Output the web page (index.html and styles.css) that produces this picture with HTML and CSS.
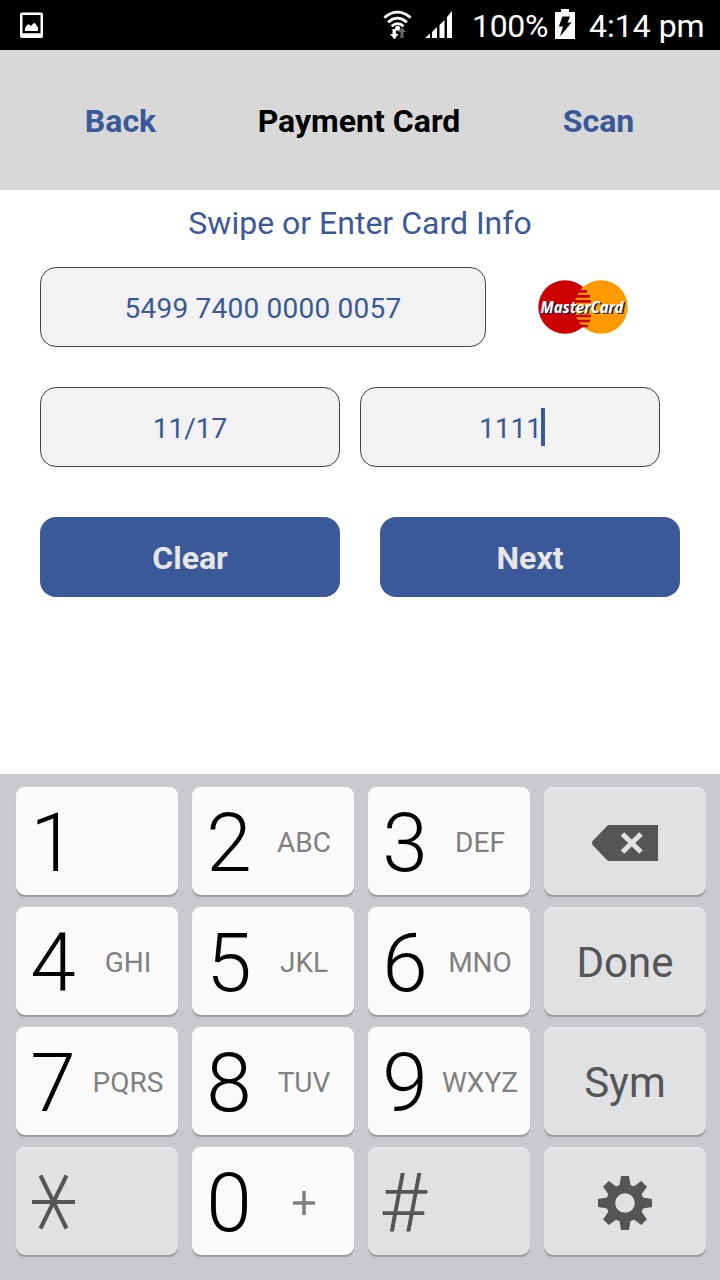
FILE: index.html
```html
<!DOCTYPE html>
<html lang="en">
<head>
  <meta charset="utf-8">
  <title>Payment Card</title>
  <link rel="stylesheet" href="styles.css">
</head>
<body>
  <div class="status">
    <svg class="icon-pic" width="26" height="28" viewBox="0 0 26 28">
      <path fill="#fff" fill-rule="evenodd" d="M3 .5h19a2 2 0 0 1 2 2v21.500a2 2 0 0 1-2 2H3a2 2 0 0 1-2-2V2.500a2 2 0 0 1 2-2zM3.500 3v18.300h18V3z"/>
      <path fill="#fff" d="M6 19v-3l2.500-3.500h1.500l2 1.500 2.500-2.800h1.500l3 4.300v3.500z"/>
    </svg>
    <div class="status-right">
      <svg class="icon-wifi" width="30" height="30" viewBox="0 0 30 30">
        <g fill="none" stroke="#fff" stroke-width="2.700">
          <path d="M1.300 7.600q13.200-11 26.400 0"/>
          <path d="M5 12.200q9.500-8 19 0"/>
          <path d="M8.600 16.200q6-5 12 0"/>
        </g>
        <circle cx="14.600" cy="18.200" r="2.500" fill="#fff"/>
        <path fill="#fff" d="M9.500 19h3.500v5h2.500l-4 5.300L7 24h2.500z"/>
        <path fill="#666" d="M17.500 28v-6h-2.700l4.200-4.600 4.200 4.600h-2.700v6z"/>
      </svg>
      <svg class="icon-signal" width="28" height="28" viewBox="0 0 28 28">
        <path fill="#fff" d="M0 27l5-4.500V27zM7 21l5-5v11H7zM14.500 14l5-5v18h-5zM22 6l5-6v27h-5z"/>
      </svg>
      <span class="percent">100%</span>
      <svg class="icon-battery" width="20" height="30" viewBox="0 0 20 30">
        <path fill="#fff" d="M6 0h8v3h6v27H0V3h6z"/>
        <path fill="#000" d="M7.500 7.500h7.500l-2.500 6h4L5 27.500l3-10H3.800z"/>
      </svg>
      <span class="time">4:14 pm</span>
    </div>
  </div>

  <div class="header">
    <a class="nav">Back</a>
    <h1>Payment Card</h1>
    <a class="nav">Scan</a>
  </div>

  <div class="content">
    <p class="hint">Swipe or Enter Card Info</p>
    <div class="row">
      <div class="field number">5499 7400 0000 0057</div>
      <svg class="logo" width="92" height="56" viewBox="0 0 92 56">
        <circle cx="27" cy="28" r="26.700" fill="#c00"/>
        <circle cx="63" cy="28" r="26.700" fill="#f90"/>
        <path stroke="#c00" stroke-width="2.600" d="M40 12.400h9M38 17.400h14M37 22.400h16M37 37h16M38 42h14M41 47h9"/>
        <g class="logo-text">
          <text x="4" y="34.500" fill="#224" textLength="83" lengthAdjust="spacingAndGlyphs">MasterCard</text>
          <text x="2.500" y="33.500" fill="#fff" textLength="83" lengthAdjust="spacingAndGlyphs">MasterCard</text>
        </g>
      </svg>
    </div>
    <div class="row">
      <div class="field">11/17</div>
      <div class="field">1111<span class="caret"></span></div>
    </div>
    <div class="row buttons">
      <div class="btn">Clear</div>
      <div class="btn">Next</div>
    </div>
  </div>

  <div class="keyboard">
    <div class="key"><b>1</b></div>
    <div class="key"><b>2</b><i>ABC</i></div>
    <div class="key"><b>3</b><i>DEF</i></div>
    <div class="key fn">
      <svg width="66" height="36" viewBox="0 0 66 36">
        <path fill="#555" d="M16 0h50v36H16L1 20.500q-2-2.500 0-5z"/>
        <path stroke="#e0e1e3" stroke-width="5" d="M30.500 9l18.500 18M49 9l-18.500 18"/>
      </svg>
    </div>
    <div class="key"><b>4</b><i>GHI</i></div>
    <div class="key"><b>5</b><i>JKL</i></div>
    <div class="key"><b>6</b><i>MNO</i></div>
    <div class="key fn"><span>Done</span></div>
    <div class="key"><b>7</b><i>PQRS</i></div>
    <div class="key"><b>8</b><i>TUV</i></div>
    <div class="key"><b>9</b><i>WXYZ</i></div>
    <div class="key fn"><span>Sym</span></div>
    <div class="key gray">
      <svg class="star" width="43" height="56" viewBox="0 0 43 56">
        <path stroke="#555" stroke-width="4" d="M0 28h43M8.500 1.500l26 53M34.500 1.500l-26 53"/>
      </svg>
    </div>
    <div class="key"><b>0</b>
      <svg class="plus" width="24" height="24" viewBox="0 0 24 24">
        <path stroke="#7f7f7f" stroke-width="3.500" d="M1 12h22M12 0v24"/>
      </svg>
    </div>
    <div class="key gray hash"><b>#</b></div>
    <div class="key fn">
      <svg width="54" height="54" viewBox="-27 -27 54 54">
        <g fill="#555">
          <path id="tooth" d="M-4-27h8l2 12H-6z"/>
          <use href="#tooth" transform="rotate(45)"/>
          <use href="#tooth" transform="rotate(90)"/>
          <use href="#tooth" transform="rotate(135)"/>
          <use href="#tooth" transform="rotate(180)"/>
          <use href="#tooth" transform="rotate(225)"/>
          <use href="#tooth" transform="rotate(270)"/>
          <use href="#tooth" transform="rotate(315)"/>
        </g>
        <circle r="14.300" fill="none" stroke="#555" stroke-width="9"/>
      </svg>
    </div>
  </div>
</body>
</html>
```
FILE: styles.css
```css
*{
  box-sizing:border-box;
}
body{
  margin:0;
  width:720px;
  height:1280px;
  overflow:hidden;
  background:#fff;
  font-family:Roboto, sans-serif;
  display:flex;
  flex-direction:column;
}
svg{
  display:block;
  flex:none;
  overflow:visible;
}

/* status bar */
.status{
  height:50px;
  background:#000;
  color:#fff;
  display:flex;
  justify-content:space-between;
  padding:0 15px 0 19px;
  font-size:32px;
  line-height:52px;
}
.status-right{
  display:flex;
}
.icon-pic{
  margin-top:12px;
}
.icon-wifi{
  margin:10px 12px 0 0;
}
.icon-signal{
  margin:11px 19px 0 0;
}
.percent{
  width:83px;
  letter-spacing:-0.3px;
}
.icon-battery{
  margin:9px 14px 0 0;
}
.time{
  width:116px;
  white-space:nowrap;
}

.header{
  height:140px;
  background:#d8d8d8;
  display:grid;
  grid-template-columns:241px 236px 243px;
  align-items:center;
  text-align:center;
  padding-top:2px;
}
.header h1{
  margin:0;
  font-size:32px;
  font-weight:bold;
  white-space:nowrap;
}
.nav{
  color:#3b5998;
  font-size:32px;
  font-weight:bold;
}

/* card form */
.content{
  height:584px;
  padding:0 40px;
  color:#3b5998;
}
.hint{
  margin:0;
  height:77px;
  line-height:66px;
  font-size:32px;
  text-align:center;
}
.row{
  display:flex;
  gap:20px;
  margin-bottom:40px;
}
.field{
  width:300px;
  height:80px;
  border:1px solid #444;
  border-radius:16px;
  background:#f2f2f2;
  font-size:28px;
  line-height:82px;
  display:flex;
  justify-content:center;
}
.number{
  width:446px;
  letter-spacing:0.23px;
}
.logo{
  margin:12px 0 0 32px;
}
.logo-text{
  font-family:"Noto Sans", sans-serif;
  font-size:16px;
  font-weight:bold;
  font-style:italic;
}
.caret{
  width:4px;
  height:38px;
  margin:20px -4px 0 -1px;
  background:#3b5998;
}
.buttons{
  gap:40px;
  padding-top:10px;
}
.btn{
  width:300px;
  height:80px;
  border-radius:16px;
  background:#3b5998;
  color:#e6e6e6;
  font-size:32px;
  font-weight:bold;
  line-height:82px;
  text-align:center;
}

/* numeric keyboard */
.keyboard{
  height:506px;
  background:#c9cace;
  padding:13px 14px 0 16px;
  display:grid;
  grid-template-columns:repeat(4, 162px);
  grid-auto-rows:108px;
  align-content:start;
  gap:12px 14px;
}
.key{
  display:grid;
  grid-template-columns:74px 76px;
  align-items:center;
  justify-items:center;
  border-radius:9px;
  background:#fafafa;
  box-shadow:0 2px 1px #97989b, inset 0 1px #fff;
}
.key b{
  font-size:82px;
  line-height:110px;
  height:106px;
  font-weight:300;
}
.key i{
  font-size:28px;
  font-style:normal;
  color:#808080;
  padding-top:2px;
}
.fn, .gray{
  background:#e0e1e3;
  color:#555;
  box-shadow:0 2px 1px #97989b, inset 0 1px #eaebed;
}
.fn{
  display:flex;
  justify-content:center;
  font-size:42px;
  padding-top:4px;
}
.fn span{
  margin-top:-2px;
}
.star{
  margin-top:2px;
}
.plus{
  margin-top:4px;
}
.hash{
  grid-template-columns:70px 76px;
}
```
